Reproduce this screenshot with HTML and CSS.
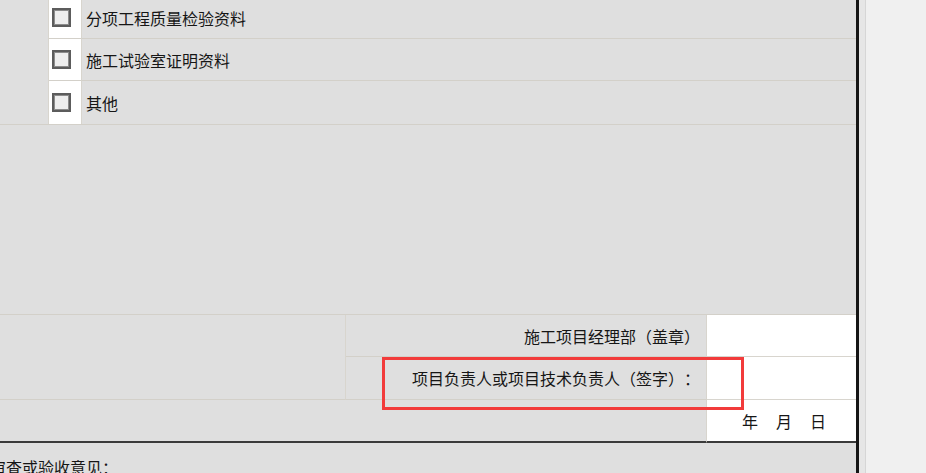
FILE: index.html
```html
<!DOCTYPE html>
<html lang="zh-CN">
<head>
<meta charset="utf-8">
<title>施工报验表</title>
<link rel="stylesheet" href="styles.css">
</head>
<body>
<div class="viewport">
  <div class="form">
    <div class="check-block">
      <div class="side-cell"></div>
      <div class="box-cell row-a"><span class="checkbox"></span></div>
      <div class="label-cell row-a">分项工程质量检验资料</div>
      <div class="box-cell row-b"><span class="checkbox"></span></div>
      <div class="label-cell row-b">施工试验室证明资料</div>
      <div class="box-cell row-c"><span class="checkbox"></span></div>
      <div class="label-cell row-c">其他</div>
    </div>

    <div class="blank-block"></div>

    <div class="sign-block">
      <div class="sign-left"></div>
      <div class="sign-label r1">施工项目经理部（盖章）</div>
      <div class="sign-value r1"></div>
      <div class="sign-label r2">项目负责人或项目技术负责人（签字）：</div>
      <div class="sign-value r2"></div>
      <div class="date-left"></div>
      <div class="sign-value date"><span>年</span><span>月</span><span>日</span></div>
      <div class="highlight"></div>
    </div>

    <div class="opinion">审查或验收意见：</div>
  </div>
  <div class="edge"></div>
  <div class="side-panel"></div>
</div>
</body>
</html>
```

FILE: styles.css
```css
* {
  box-sizing: border-box;
}

html, body {
  margin: 0;
  padding: 0;
  height: 100%;
  overflow: hidden;
  background: #f0f0f0;
}

body {
  font-family: "Noto Sans CJK SC", "Liberation Sans", sans-serif;
  font-size: 16px;
  color: #161616;
  text-spacing-trim: space-all;
}

.viewport {
  display: flex;
  height: 473px;
}

.form {
  position: relative;
  width: 859px;
  flex: 0 0 859px;
  margin-top: -3px;
  background: #dfdfdf;
  border-right: 3px solid #151515;
  overflow: hidden;
}

.edge {
  flex: 0 0 7px;
  background: #e6e6e6;
  border-right: 1px solid #d6d6d6;
}

.side-panel {
  flex: 1;
  background: #f0f0f0;
}

/* checkbox rows */
.check-block {
  display: grid;
  grid-template-columns: 49px 33px 1fr;
  grid-template-rows: 42px 42px 43px;
  border-bottom: 1px solid #d3d0c9;
}

.side-cell {
  grid-row: 1 / 4;
  border-right: 1px solid #d8d5ce;
}

.box-cell {
  background: #ffffff;
  border-right: 1px solid #d8d5ce;
  display: flex;
  align-items: center;
  padding-left: 3px;
}

.label-cell {
  display: flex;
  align-items: center;
  padding-left: 4px;
}

.row-a,
.row-b {
  border-bottom: 1px solid #d3d0c9;
}

.checkbox {
  display: block;
  width: 19px;
  height: 19px;
  border: 2px solid #5c5c5c;
  box-shadow: inset 0 0 0 1px #8c8c8c;
  background: #eeeeee;
}

/* empty area */
.blank-block {
  height: 190px;
  border-bottom: 1px solid #d3d0c9;
}

/* signature rows */
.sign-block {
  position: relative;
  display: grid;
  grid-template-columns: 346px 361px 149px;
  grid-template-rows: 42px 43px 43px;
}

.sign-left {
  grid-row: 1 / 3;
  grid-column: 1;
  border-right: 1px solid #d8d5ce;
  border-bottom: 1px solid #d3d0c9;
}

.sign-label {
  grid-column: 2;
  display: flex;
  align-items: center;
  justify-content: flex-end;
  padding-right: 6px;
  border-right: 1px solid #d8d5ce;
  border-bottom: 1px solid #d3d0c9;
  white-space: nowrap;
}

.sign-label.r1 { grid-row: 1; }
.sign-label.r2 { grid-row: 2; }

.sign-value {
  grid-column: 3;
  background: #ffffff;
  border-bottom: 1px solid #d8d5ce;
}

.sign-value.r1 { grid-row: 1; }
.sign-value.r2 { grid-row: 2; }

.date-left {
  grid-row: 3;
  grid-column: 1 / 3;
  border-right: 1px solid #d8d5ce;
  border-bottom: 2px solid #3a3a3a;
}

.sign-value.date {
  grid-row: 3;
  display: flex;
  align-items: center;
  gap: 18px;
  padding-left: 35px;
  border-bottom: 2px solid #3a3a3a;
}

.highlight {
  position: absolute;
  left: 382px;
  top: 42px;
  width: 362px;
  height: 53px;
  border: 3px solid #f23b3b;
  pointer-events: none;
}

.opinion {
  padding-top: 13px;
  line-height: 22px;
  text-indent: -10px;
  white-space: nowrap;
}
```
